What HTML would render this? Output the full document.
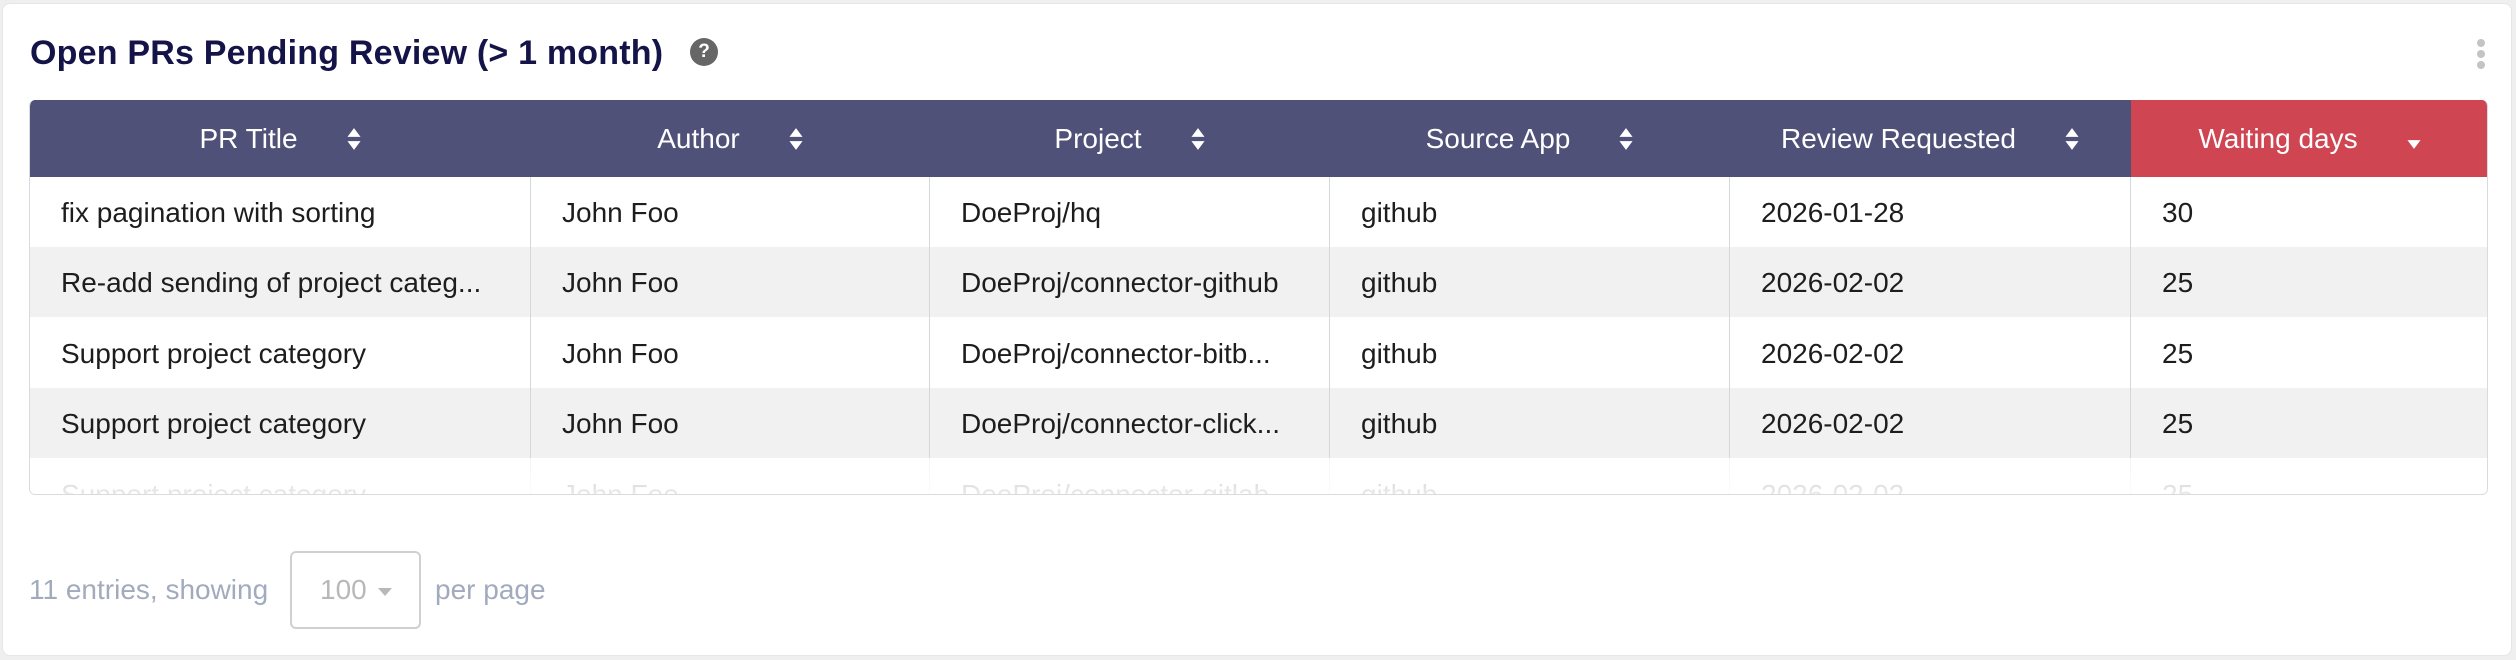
<!DOCTYPE html>
<html><head><meta charset="utf-8"><style>
*{box-sizing:border-box;margin:0;padding:0}
body{width:2516px;height:660px;background:#efefef;font-family:"Liberation Sans",sans-serif;overflow:hidden;position:relative}
.card{position:absolute;left:2px;top:3px;width:2510px;height:653px;background:#fff;border-radius:8px;border:1px solid #e6e6e6}
.title{position:absolute;font-size:34px;font-weight:bold;color:#141448;letter-spacing:0.2px}
.help{position:absolute;width:28px;height:28px;border-radius:50%;background:#666;color:#fff;font-size:19px;font-weight:bold;text-align:center;line-height:28px}
.kebab{position:absolute;width:9px}
.kebab i{display:block;width:8px;height:8px;border-radius:50%;background:#c4c4c4;margin-bottom:3px}
.tbl{position:absolute;left:29px;top:100px;width:2459px;height:395px;border:1px solid #d8dbe0;border-top:none;border-radius:6px;overflow:hidden}
.hd{position:absolute;top:0;height:77px;background:#4f5179;color:#fff;font-size:28px;display:flex;align-items:center;justify-content:center;gap:48px}
.hd.red{background:#cf4551}
.row{position:absolute;left:0;width:2459px;height:70px}
.row.alt{background:#f1f1f1}
.c{position:absolute;top:0;height:70px;line-height:72px;font-size:28px;color:#1d1d1d;padding-left:31px;padding-right:10px;white-space:nowrap;overflow:hidden}
.vl{position:absolute;top:77px;height:320px;width:1px;background:#d4d7dd}
.foot{position:absolute;left:29px;top:574px;font-size:28px;color:#a1abbd}
.sel{position:absolute;left:290px;top:551px;width:131px;height:78px;border:2px solid #d0d0d0;border-radius:6px;font-size:28px;color:#b8b8b8;line-height:74px;padding-left:28px}
</style></head><body>
<div class="card">
<div class="title" style="left:27px;top:30px">Open PRs Pending Review (&gt; 1 month)</div>
<div class="help" style="left:687px;top:34px">?</div>
<div class="kebab" style="left:2474px;top:35px"><i></i><i></i><i></i></div>
</div>
<div class="tbl">
<div class="hd" style="left:0;width:501px">PR Title <svg width="16" height="24" viewBox="0 0 14 22"><path d="M7 1L13 9H1Z M7 21L13 13H1Z" fill="#fff"/></svg></div>
<div class="hd" style="left:501px;width:399px">Author <svg width="16" height="24" viewBox="0 0 14 22"><path d="M7 1L13 9H1Z M7 21L13 13H1Z" fill="#fff"/></svg></div>
<div class="hd" style="left:900px;width:400px">Project <svg width="16" height="24" viewBox="0 0 14 22"><path d="M7 1L13 9H1Z M7 21L13 13H1Z" fill="#fff"/></svg></div>
<div class="hd" style="left:1300px;width:400px">Source App <svg width="16" height="24" viewBox="0 0 14 22"><path d="M7 1L13 9H1Z M7 21L13 13H1Z" fill="#fff"/></svg></div>
<div class="hd" style="left:1700px;width:401px">Review Requested <svg width="16" height="24" viewBox="0 0 14 22"><path d="M7 1L13 9H1Z M7 21L13 13H1Z" fill="#fff"/></svg></div>
<div class="hd red" style="left:2101px;width:358px">Waiting days <svg width="16" height="24" viewBox="0 0 14 22"><path d="M7 20L13 12H1Z" fill="#fff"/></svg></div>

<div class="row" style="top:77px">
<div class="c" style="left:0;width:500px">fix pagination with sorting</div><div class="c" style="left:501px;width:399px">John Foo</div><div class="c" style="left:900px;width:400px">DoeProj/hq</div><div class="c" style="left:1300px;width:400px">github</div><div class="c" style="left:1700px;width:401px">2026-01-28</div><div class="c" style="left:2101px;width:358px">30</div></div>
<div class="row alt" style="top:147px">
<div class="c" style="left:0;width:500px">Re-add sending of project categ...</div><div class="c" style="left:501px;width:399px">John Foo</div><div class="c" style="left:900px;width:400px">DoeProj/connector-github</div><div class="c" style="left:1300px;width:400px">github</div><div class="c" style="left:1700px;width:401px">2026-02-02</div><div class="c" style="left:2101px;width:358px">25</div></div>
<div class="row" style="top:218px">
<div class="c" style="left:0;width:500px">Support project category</div><div class="c" style="left:501px;width:399px">John Foo</div><div class="c" style="left:900px;width:400px">DoeProj/connector-bitb...</div><div class="c" style="left:1300px;width:400px">github</div><div class="c" style="left:1700px;width:401px">2026-02-02</div><div class="c" style="left:2101px;width:358px">25</div></div>
<div class="row alt" style="top:288px">
<div class="c" style="left:0;width:500px">Support project category</div><div class="c" style="left:501px;width:399px">John Foo</div><div class="c" style="left:900px;width:400px">DoeProj/connector-click...</div><div class="c" style="left:1300px;width:400px">github</div><div class="c" style="left:1700px;width:401px">2026-02-02</div><div class="c" style="left:2101px;width:358px">25</div></div>
<div class="row" style="top:359px">
<div class="c" style="left:0;width:500px">Support project category</div><div class="c" style="left:501px;width:399px">John Foo</div><div class="c" style="left:900px;width:400px">DoeProj/connector-gitlab</div><div class="c" style="left:1300px;width:400px">github</div><div class="c" style="left:1700px;width:401px">2026-02-02</div><div class="c" style="left:2101px;width:358px">25</div></div>
<div class="vl" style="left:500px"></div><div class="vl" style="left:899px"></div><div class="vl" style="left:1299px"></div><div class="vl" style="left:1699px"></div><div class="vl" style="left:2100px"></div>
<div style="position:absolute;left:0;top:358px;width:2459px;height:40px;background:linear-gradient(rgba(255,255,255,0.75),rgba(255,255,255,0.92))"></div>
</div>
<div class="foot">11 entries, showing</div>
<div class="sel">100 <svg width="16" height="10" viewBox="0 0 16 10" style="vertical-align:middle;margin-left:2px"><path d="M1 1H15L8 9Z" fill="#b8b8b8"/></svg></div>
<div class="foot" style="left:435px">per page</div>
</body></html>
